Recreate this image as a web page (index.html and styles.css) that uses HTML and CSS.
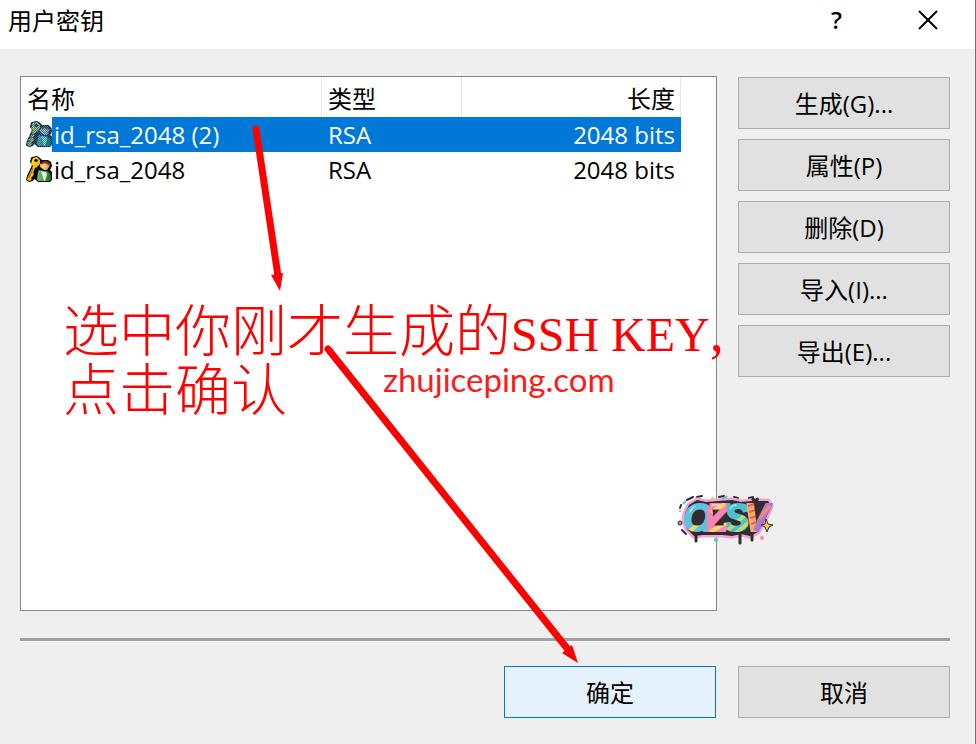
FILE: index.html
```html
<!DOCTYPE html>
<html lang="zh-CN">
<head>
    <meta charset="UTF-8">
    <meta name="viewport" content="width=device-width, initial-scale=1.0">
    <title>用户密钥</title>
    <link rel="stylesheet" href="styles.css">
</head>
<body>

<!-- shared key + user icon -->
<svg class="defs" width="0" height="0" aria-hidden="true">
    <defs>
        <linearGradient id="gold" x1="0" y1="0" x2="1" y2="1">
            <stop offset="0" stop-color="#ffe680"/>
            <stop offset=".5" stop-color="#ffc400"/>
            <stop offset="1" stop-color="#c87800"/>
        </linearGradient>
        <linearGradient id="green" x1="0" y1="0" x2="1" y2="0">
            <stop offset="0" stop-color="#6fc06f"/>
            <stop offset=".6" stop-color="#3f9a3f"/>
            <stop offset="1" stop-color="#146414"/>
        </linearGradient>
        <radialGradient id="skin" cx=".4" cy=".6" r=".6">
            <stop offset="0" stop-color="#ffd9a0"/>
            <stop offset="1" stop-color="#d9822b"/>
        </radialGradient>
        <pattern id="dither" width="2" height="2" patternUnits="userSpaceOnUse">
            <path d="M0 0h1v1H0zM1 1h1v1H1z" fill="#0078d7" shape-rendering="crispEdges"/>
        </pattern>
        <path id="shape" d="M6 1l5-1 3 2 2 2h6l3 2 1 4-2 4 2 2v8l-2 2H12l-2-2-2-1-1 2-4 1-3-2 1-4 5-11-2-3 1-4z"/>
        <symbol id="key-user" viewBox="0 0 26 26">
            <use href="#shape" fill="#000"/>
            <path d="M7 2l4-1 3 3v4l-3 3-2 1-2 5 1 1-1 2-1 1-1 1 1 1-2 2-3-1 1-3 5-11-2-2 1-4z" fill="url(#gold)"/>
            <path d="M9 3l2 0 1 2-2 1-2-1z" fill="#000"/>
            <path d="M7 12l-4 10" stroke="#a05a00" fill="none"/>
            <path d="M14 8l4-3 6 3-1 3-2 3h-3l-4-3z" fill="url(#skin)"/>
            <path d="M14 8l3-3h5l2 3-1 1-4-2-3 1z" fill="#7a2d08"/>
            <path d="M13 14l5 1h3l3 2 1 3v4l-1 1H12l-1-2 1-7z" fill="url(#green)"/>
            <path d="M15 15l3 1 2 0 1 2-2 7h-1z" fill="#f4fff4"/>
        </symbol>
    </defs>
</svg>

<div class="dialog">
    <header class="titlebar">
        <h1 class="title">用户密钥</h1>
        <button type="button" class="caption-btn help" aria-label="帮助">?</button>
        <button type="button" class="caption-btn" aria-label="关闭">
            <svg width="22" height="22" viewBox="0 0 22 22"><path d="M2 1l18 18M20 1L2 19" stroke="#000" stroke-width="2" fill="none"/></svg>
        </button>
    </header>

    <main class="content">
        <div class="panel">
            <div class="list">
                <table class="keys">
                    <thead>
                        <tr>
                            <th class="col-name">名称</th>
                            <th class="col-type">类型</th>
                            <th class="col-length">长度</th>
                        </tr>
                    </thead>
                    <tbody>
                        <tr class="selected">
                            <td class="name">
                                <div class="name-cell">
                                    <svg class="icon" viewBox="0 0 26 26">
                                        <use href="#key-user" width="26" height="26"/>
                                        <use href="#shape" fill="url(#dither)"/>
                                    </svg>
                                    <span class="label">id_rsa_2048 (2)</span>
                                </div>
                            </td>
                            <td>RSA</td>
                            <td class="length">2048 bits</td>
                        </tr>
                        <tr>
                            <td class="name">
                                <div class="name-cell">
                                    <svg class="icon" viewBox="0 0 26 26"><use href="#key-user" width="26" height="26"/></svg>
                                    <span class="label">id_rsa_2048</span>
                                </div>
                            </td>
                            <td>RSA</td>
                            <td class="length">2048 bits</td>
                        </tr>
                    </tbody>
                </table>
            </div>

            <div class="actions">
                <button type="button" class="btn">生成(G)...</button>
                <button type="button" class="btn">属性(P)</button>
                <button type="button" class="btn">删除(D)</button>
                <button type="button" class="btn">导入(I)...</button>
                <button type="button" class="btn">导出(E)...</button>
            </div>
        </div>

        <hr class="divider">

        <footer class="footer">
            <button type="button" class="btn primary">确定</button>
            <button type="button" class="btn">取消</button>
        </footer>
    </main>

    <!-- notes drawn over the dialog -->
    <p class="note">选中你刚才生成的<span class="latin">SSH KEY</span>,<br>点击确认</p>
    <p class="site">zhujiceping.com</p>

    <svg class="arrows" width="976" height="744" viewBox="0 0 976 744" aria-hidden="true">
        <g stroke="#f00" stroke-width="7" stroke-linecap="round">
            <path d="M256 129L278 276"/>
            <path d="M328 349L570 652"/>
        </g>
        <path d="M271 275l12-2-3 18zM562 653l10-8 6 18z" fill="#f00"/>
    </svg>

    <svg class="sticker" width="110" height="62" viewBox="0 0 110 62">
        <defs>
            <pattern id="candy" width="92" height="42" patternUnits="userSpaceOnUse" x="12" y="10">
                <rect width="92" height="42" fill="#5cc3dd"/>
                <path d="M25 0h20v42H25z" fill="#f983b5"/>
                <path d="M45 0h20v42H45z" fill="#4fc0d0"/>
                <path d="M65 0h27v42H65z" fill="#f9b060"/>
                <path d="M8 33l14-12M29 14l14-8M28 34l16-9" stroke="#ffd768" stroke-width="4"/>
                <path d="M46 32l16-14M52 37l14-12" stroke="#b4df70" stroke-width="4"/>
                <path d="M66 8l7-2M67 14l7-2M68 20l7-2M69 26l6-2" stroke="#ef5374" stroke-width="2"/>
                <path d="M90 3L75 34" stroke="#a779d8" stroke-width="9"/>
                <path d="M88 8L77 20" stroke="#f88578" stroke-width="4"/>
            </pattern>
        </defs>
        <!-- splatter and drips -->
        <path d="M17 12l6-3M27 9l5-1M64 9l4 1M79 10l4-1M11 17l-1 3M12 42l4 4M49 9l5-1" stroke="#302c32" stroke-width="2" stroke-linecap="round"/>
        <path d="M15 25l4-8 8-5 9 2 12-1 14-1 9 2 11-1 16 0 3 5-5 12-8 14-8 4-9-2-9 2-9-1H33l-9 1-7-7-3-8z" fill="#302c32" stroke="#f4a3cf" stroke-width="5" stroke-linejoin="round"/>
        <path d="M15 25l4-8 8-5 9 2 12-1 14-1 9 2 11-1 16 0 3 5-5 12-8 14-8 4-9-2-9 2-9-1H33l-9 1-7-7-3-8z" fill="#302c32"/>
        <path d="M26 46v7M70 46v9M82 45v7" stroke="#302c32" stroke-width="3" stroke-linecap="round"/>
        <text class="sticker-text" x="13 35 54 74" y="43">OZSV</text>
        <path d="M20 24q1-4 5-6M60 21q2-4 6-4M42 17h8" stroke="#fff" stroke-width="1" fill="none" stroke-linecap="round"/>
        <path d="M52 11l5-3M16 13l-3 3" stroke="#58bfe3" stroke-width="2"/>
        <circle cx="43" cy="11" r="2" fill="#f6c35f"/>
        <circle cx="10" cy="35" r="2" fill="#ef7a68" stroke="#302c32"/>
        <circle cx="10" cy="23" r="1" fill="#ef7a68"/>
        <circle cx="46" cy="52" r="2" fill="#58bfe3"/>
        <circle cx="92" cy="50" r="2" fill="#f48ac0"/>
        <path d="M85 15q-5-3-3-5 2-1 3 1 3-3 4 0 0 2-4 4z" fill="#302c32"/>
        <path d="M96 31l2 5 5 1-4 2-2 5-2-5-4-2 4-1z" fill="#ffc35c" stroke="#302c32"/>
    </svg>
</div>

</body>
</html>
```
FILE: styles.css
```css
* {
    box-sizing: border-box;
}
body {
    margin: 0;
    font-family: "Open Sans", "Noto Sans CJK SC", sans-serif;
    font-size: 24px;
    color: #000;
}
.defs {
    position: absolute;
}
.dialog {
    position: relative;
    display: flex;
    flex-direction: column;
    min-height: 100vh;
    overflow: hidden;
    background-color: #efefef;
    border-right: 1px solid #6e6e6e;
}
.titlebar {
    display: flex;
    align-items: center;
    height: 49px;
    padding: 0 2px 8px 8px;
    background-color: #fff;
}
.title {
    flex: 1;
    margin: 0;
    font-size: 24px;
    font-weight: normal;
    line-height: 40px;
}
.caption-btn {
    display: flex;
    align-items: center;
    justify-content: center;
    width: 91px;
    height: 40px;
    padding: 0;
    border: none;
    background: none;
    color: #000;
    font: inherit;
}
.help {
    padding-bottom: 2px;
    font-weight: 600;
}
.content {
    flex: 1;
    display: flex;
    flex-direction: column;
    padding: 27px 25px 26px 20px;
}
.panel {
    flex: 1;
    display: flex;
    gap: 21px;
}
.list {
    flex: 1;
    background-color: #fff;
    border: 1px solid #828790;
}
.keys {
    border-collapse: separate;
    border-spacing: 0;
    table-layout: fixed;
    width: 660px;
}
.keys th {
    height: 40px;
    padding: 4px 6px 0;
    border-right: 1px solid #e5e5e5;
    font-weight: normal;
    line-height: 36px;
    text-align: left;
}
.col-name {
    width: 301px;
}
.col-type {
    width: 140px;
}
.keys th.col-length {
    padding-right: 5px;
    text-align: right;
}
.keys td {
    height: 35px;
    padding: 0 6px;
    line-height: 35px;
}
.keys td.name {
    padding: 0 0 0 5px;
}
.keys td.length {
    text-align: right;
}
.name-cell {
    display: flex;
    align-items: center;
}
.icon {
    width: 26px;
    height: 26px;
    margin-bottom: 1px;
}
.label {
    flex: 1;
    padding-left: 2px;
}
.selected .label,
.selected td:not(.name) {
    background-color: #0078d7;
    color: #fff;
}
.actions {
    display: flex;
    flex-direction: column;
    gap: 10px;
    padding-top: 1px;
}
.btn {
    width: 212px;
    height: 52px;
    padding: 0 0 2px;
    border: 1px solid #adadad;
    background-color: #e1e1e1;
    color: #000;
    font: inherit;
}
.btn.primary {
    border-color: #0078d7;
    background-color: #e5f1fb;
}
.divider {
    width: 100%;
    height: 4px;
    margin: 27px 0 24px;
    border: none;
    border-bottom: 1px solid #fff;
    background-color: #a0a0a0;
}
.footer {
    display: flex;
    justify-content: flex-end;
    gap: 22px;
}
.note {
    position: absolute;
    top: 304px;
    left: 63px;
    margin: 0;
    color: #f00;
    font-family: "Liberation Serif", "Noto Sans CJK SC", serif;
    font-size: 56px;
    font-weight: 300;
    line-height: 56px;
    white-space: nowrap;
}
.latin {
    font-size: 48px;
}
.site {
    position: absolute;
    top: 359px;
    left: 383px;
    margin: 0;
    color: #ff1a1a;
    font-family: "Comic Sans MS", Lato, sans-serif;
    font-size: 33px;
    line-height: 40px;
}
.arrows {
    position: absolute;
    top: 0;
    left: 0;
    pointer-events: none;
}
.sticker {
    position: absolute;
    top: 488px;
    left: 670px;
}
.sticker-text {
    fill: url(#candy);
    stroke: url(#candy);
    stroke-width: 2px;
    stroke-linejoin: round;
    font-family: "Liberation Sans", sans-serif;
    font-size: 38px;
    font-style: italic;
    font-weight: bold;
}
```
